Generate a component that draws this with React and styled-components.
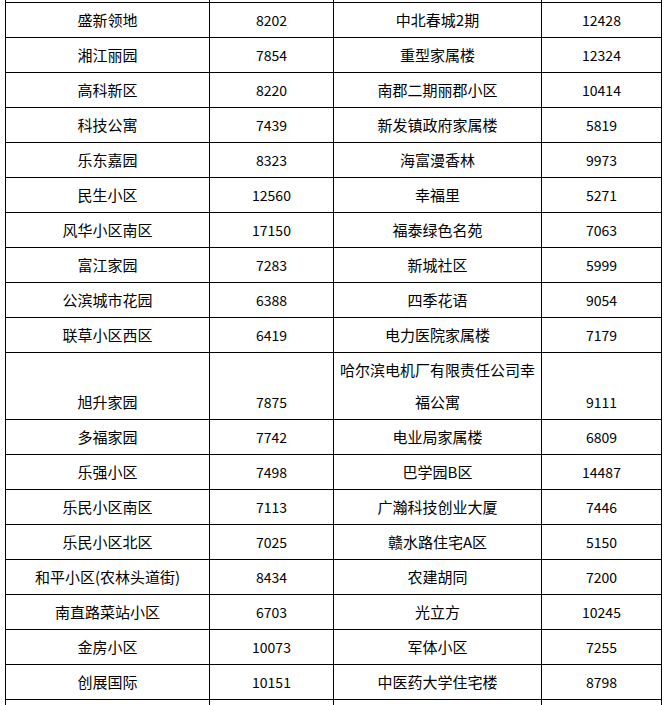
import React from "react";
import styled, { createGlobalStyle } from "styled-components";

const Global = createGlobalStyle`
  html, body { margin: 0; padding: 0; background: #fff; }
  body { height: 705px; overflow: hidden; }
`;

const Page = styled.div`
  padding-left: 5px;
  height: 705px;
  overflow: hidden;
`;

const Table = styled.table`
  border-collapse: collapse;
  table-layout: fixed;
  width: 656px;
  font-family: "Noto Sans CJK SC", "Noto Sans", sans-serif;
  color: #000;
`;

const Cell = styled.td`
  border: 1px solid #000;
  padding: 1px;
  text-align: center;
  vertical-align: bottom;
  line-height: 32px;
  height: 32px;
  font-size: ${(p) => (p.$num ? "14px" : "15px")};
`;

const CutCell = styled.td`
  border: 1px solid #000;
  border-top: none;
  padding: 0;
  height: 2px;
  line-height: 2px;
  font-size: 1px;
`;

const rows = [
  ["盛新领地", "8202", "中北春城2期", "12428"],
  ["湘江丽园", "7854", "重型家属楼", "12324"],
  ["高科新区", "8220", "南郡二期丽郡小区", "10414"],
  ["科技公寓", "7439", "新发镇政府家属楼", "5819"],
  ["乐东嘉园", "8323", "海富漫香林", "9973"],
  ["民生小区", "12560", "幸福里", "5271"],
  ["风华小区南区", "17150", "福泰绿色名苑", "7063"],
  ["富江家园", "7283", "新城社区", "5999"],
  ["公滨城市花园", "6388", "四季花语", "9054"],
  ["联草小区西区", "6419", "电力医院家属楼", "7179"],
  ["旭升家园", "7875", "哈尔滨电机厂有限责任公司幸福公寓", "9111"],
  ["多福家园", "7742", "电业局家属楼", "6809"],
  ["乐强小区", "7498", "巴学园B区", "14487"],
  ["乐民小区南区", "7113", "广瀚科技创业大厦", "7446"],
  ["乐民小区北区", "7025", "赣水路住宅A区", "5150"],
  ["和平小区(农林头道街)", "8434", "农建胡同", "7200"],
  ["南直路菜站小区", "6703", "光立方", "10245"],
  ["金房小区", "10073", "军体小区", "7255"],
  ["创展国际", "10151", "中医药大学住宅楼", "8798"],
  ["", "", "", ""],
];

export default function App() {
  return (
    <Page>
      <Global />
      <Table>
        <colgroup>
          <col style={{ width: 204 }} />
          <col style={{ width: 124 }} />
          <col style={{ width: 208 }} />
          <col style={{ width: 120 }} />
        </colgroup>
        <tbody>
          <tr>
            <CutCell />
            <CutCell />
            <CutCell />
            <CutCell />
          </tr>
          {rows.map((r, i) => (
            <tr key={i}>
              <Cell>{r[0]}</Cell>
              <Cell $num>{r[1]}</Cell>
              <Cell>{r[2]}</Cell>
              <Cell $num>{r[3]}</Cell>
            </tr>
          ))}
        </tbody>
      </Table>
    </Page>
  );
}
